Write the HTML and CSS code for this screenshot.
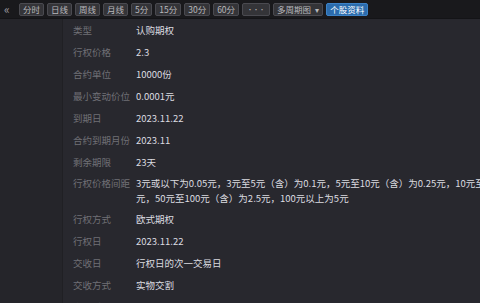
FILE: index.html
```html
<!DOCTYPE html>
<html>
<head>
<meta charset="utf-8">
<link rel="stylesheet" href="styles.css">
</head>
<body>
<div class="toolbar">
  <span class="collapse">«</span>
  <span class="btn">分时</span>
  <span class="btn">日线</span>
  <span class="btn">周线</span>
  <span class="btn">月线</span>
  <span class="btn">5分</span>
  <span class="btn">15分</span>
  <span class="btn">30分</span>
  <span class="btn">60分</span>
  <span class="btn dots">•••</span>
  <span class="btn drop">多周期图<span class="caret">▾</span></span>
  <span class="btn active">个股资料</span>
</div>
<div class="body">
  <div class="side"></div>
  <div class="main">
    <div class="row"><span class="k">类型</span><span class="v">认购期权</span></div>
    <div class="row"><span class="k">行权价格</span><span class="v">2.3</span></div>
    <div class="row"><span class="k">合约单位</span><span class="v">10000份</span></div>
    <div class="row"><span class="k">最小变动价位</span><span class="v">0.0001元</span></div>
    <div class="row"><span class="k">到期日</span><span class="v">2023.11.22</span></div>
    <div class="row"><span class="k">合约到期月份</span><span class="v">2023.11</span></div>
    <div class="row"><span class="k">剩余期限</span><span class="v">23天</span></div>
    <div class="row tall"><span class="k">行权价格间距</span><span class="v">3元或以下为0.05元，3元至5元（含）为0.1元，5元至10元（含）为0.25元，10元至20元（含）为0.5元，20元至50<br>元，50元至100元（含）为2.5元，100元以上为5元</span></div>
    <div class="row"><span class="k">行权方式</span><span class="v">欧式期权</span></div>
    <div class="row"><span class="k">行权日</span><span class="v">2023.11.22</span></div>
    <div class="row"><span class="k">交收日</span><span class="v">行权日的次一交易日</span></div>
    <div class="row"><span class="k">交收方式</span><span class="v">实物交割</span></div>
    <div class="row"><span class="k">交易时间</span><span class="v">上午 9:15 - 9:25，9:30 - 11:30，下午 13:00 - 15:00</span></div>
  </div>
</div>
</body>
</html>
```
FILE: styles.css
```css
html, body {
  margin: 0;
  padding: 0;
  width: 480px;
  height: 303px;
  overflow: hidden;
  background: #28282e;
  font-family: "Noto Sans CJK SC", "Liberation Sans", sans-serif;
}
.toolbar {
  height: 19px;
  background: #19191c;
  display: flex;
  align-items: center;
  gap: 3px;
  padding-left: 4px;
  box-sizing: border-box;
  border-bottom: 1px solid #141417;
}
.collapse {
  color: #9a9aa0;
  font-size: 12px;
  width: 9px;
  margin-right: 3px;
  line-height: 12px;
}
.btn {
  height: 13px;
  box-sizing: border-box;
  padding: 0 3px;
  background: #343438;
  border: 1px solid #4a4a50;
  border-radius: 2px;
  color: #b8b8bc;
  font-size: 8.5px;
  line-height: 11px;
  display: flex;
  align-items: center;
  white-space: nowrap;
}
.dots {
  padding: 0 4px;
  font-size: 6px;
}
.caret {
  margin-left: 4px;
  font-size: 8px;
}
.active {
  background: #2b6cad;
  border-color: #3d82c6;
  color: #ffffff;
}
.body {
  display: flex;
  height: 284px;
}
.side {
  width: 62px;
  flex: none;
  background: #25252a;
  border-right: 1px solid #202024;
}
.main {
  flex: 1;
  padding: 0 0 0 10px;
  white-space: nowrap;
}
.row {
  display: flex;
  height: 22px;
  align-items: center;
  font-size: 9.5px;
}
.row.tall {
  height: 35px;
  align-items: flex-start;
  padding-top: 3px;
  box-sizing: border-box;
}
.row.tall .v {
  line-height: 15px;
}
.k {
  width: 63px;
  flex: none;
  color: #707076;
}
.v {
  color: #dcdce0;
}
```
